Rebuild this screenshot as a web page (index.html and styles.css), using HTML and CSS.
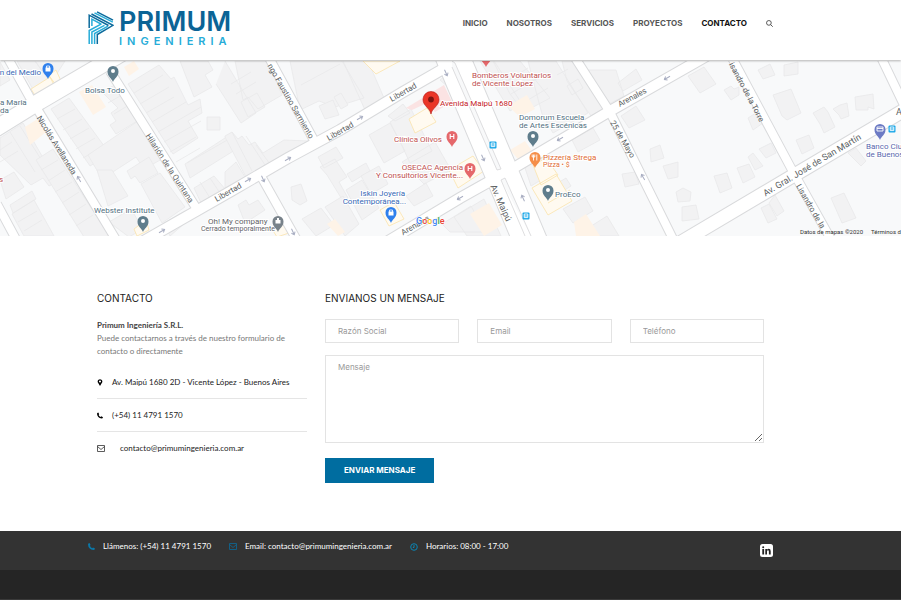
FILE: index.html
```html
<!DOCTYPE html>
<html lang="es">
<head>
<meta charset="utf-8">
<meta name="viewport" content="width=device-width, initial-scale=1">
<title>Contacto - Primum Ingeniería</title>
<link rel="stylesheet" href="styles.css">
</head>
<body>
<header class="header">
  <a class="logo" href="#">
    <svg class="logo-mark" viewBox="0 0 26 34" aria-hidden="true">
      <g fill="none" stroke-width="1.5">
        <g stroke="#27acd8">
          <path d="M6.500 1.800L24.800 11.200"/>
          <path d="M1.200 33V19.500L13.500 12.800"/>
          <path d="M3.900 33V21L16.500 14.300"/>
          <path d="M6.600 33V22.500L20 15.200"/>
          <path d="M3.900 15V8.200L13 13"/>
        </g>
        <g stroke="#0b6a9c">
          <path d="M9 .8L25 9.200"/>
          <path d="M1.200 17V4.200L20.500 14.500"/>
          <path d="M3.500 3L25 14.300 9.300 23.500V33"/>
        </g>
      </g>
    </svg>
    <span class="logo-text"><span class="logo-name">PRIMUM</span><span class="logo-sub">INGENIERIA</span></span>
  </a>
  <nav class="nav">
    <a href="#">INICIO</a>
    <a href="#">NOSOTROS</a>
    <a href="#">SERVICIOS</a>
    <a href="#">PROYECTOS</a>
    <a class="active" href="#">CONTACTO</a>
    <button class="search" type="button" aria-label="Buscar">
      <svg viewBox="0 0 8 8"><circle cx="3.300" cy="3.300" r="2.700"/><path d="M5.200 5.200L7.700 7.700"/></svg>
    </button>
  </nav>
</header>

<main>
  <section class="map" aria-label="Mapa">
    <svg viewBox="0 61 901 175" preserveAspectRatio="xMidYMid slice">
      <defs>
        <path id="pin" d="M0 9C-1 5.500-5.500 4-5.500-1.500a5.500 5.500 0 0 1 11 0C5.500 4 1 5.500 0 9z"/>
        <path id="arrow" d="M-3.500 0H3M.5-2L3 0 .5 2"/>
        <g id="bus"><rect x="-3.500" y="-3.500" width="7" height="7" rx="1" fill="#1aa7e8"/><path d="M-1.800-2h3.600v3.600h-3.600zM-1.800 0h3.600" fill="none" stroke="#fff" stroke-width=".9"/></g>
      </defs>
      <rect y="50" width="901" height="200" fill="#f8f9fa"/>

      <g class="lot">
        <path d="M0 62L10 80 0 86zM17 61h18l16 22-16 10zM35 61h30l-14 22z"/>
        <path d="M51 109l18-11 41 56-20 12zM57 119l18-10M63 130l19-11M70 139l19-11M76 149l19-11M83 158l19-11"/>
        <path d="M0 138l23-15 34 59-8 4-6-8-12 7-31-30zM10 132l25 40M20 126l24 38M0 150l12-8M0 162l18-11"/>
        <path d="M36 160l17-11 57 88H84zM41 170l17-10M48 181l17-11M55 192l17-10M62 203l17-11M69 215l17-11M76 226l17-11"/>
        <path d="M0 180l14-8 10 15-18 12zM10 205l22-14 4 8-23 14zM12 214l22-14 20 36H24zM18 222l19-11M24 231l18-11"/>
        <path d="M102 92l18-10 22 36-26 16-6-9 6-4-5-8 7-5zM108 103l19-11M114 114l20-12"/>
        <path d="M128 84l31-19 12 14 3-2 14 28 12-6 2 14-14 8 10 17-25 16zM134 93l29-18M140 104l29-17M146 113l28-16M152 122l34-20M158 132l43-25M164 142l37-21M170 152l26-15M176 162l24-14"/>
        <path d="M180 61l14 36 18-10-7-12 8-5-5-9zM207 117h13v13h-13z"/>
        <path d="M88 155l50-34 24 38-18 10-8-12-34 22z"/>
        <path d="M97 170l11 36 20-10-16-26zM127 171l22-14 9 16-18 10-5-7-4 3zM141 184l19-11 25 34-23 16zM109 222l22-13 12 20-14 8zM164 223l21-12 7 6-22 19z"/>
        <path d="M190 178l45-28-7-14-43 28zM187 163l42-24M194 188l20-12 12 14-24 15zM200 182l10 16M210 178l10 15"/>
        <path d="M235 61h33l14 34-24 14-10-12-5 3zM225 61l31 52-15 10-25-39M241 102l16-9 8 14-17 10zM231 84l20-12M236 94l20-12"/>
        <path d="M225 136l7-4 6 7 4-3 7 9 6-3 8 11 21-13 24 1-62 36-21-40zM232 132l20 39M246 136l21 32M256 145l14 19"/>
        <path d="M225 172l11-10 9 15-20 11zM238 205l8-5 3 5 9-5 7 10-20 13zM290 61h52l22 37-29 9-16-6-19 9zM301 85l39-21M343 61h25l16 37-19 12z"/>
        <path d="M319 106l14-6 6 15-14 4zM334 97l7-4 7 12-7 4z"/>
        <path d="M318 157l18-10 7 11-19 10zM320 167l15-8 12 18-8 5 9 16-5 3-16-26zM347 174l19-11 4 8-18 11zM291 187l10-3 6 17-7 4-8-5z"/>
        <path d="M302 219l19-11 13 17-18 11zM325 207l18-11 16 28-14 12zM346 190l16-10 17 28-17 12zM361 176l18-10 9 18-17 10z"/>
        <path d="M369 135l21-12 15 28-21 12zM390 122l21-13 21 42-22 12-7-15zM388 116l15-12 7 9-15 8zM402 162l33-20 16 28-27 14zM406 196l20-13 7 13-19 10z"/>
        <path d="M442 224l29-18 14 26h-35zM454 217l30-18 17 37h-34zM459 193l22-13M440 80l11-9 4 22z"/>
        <path d="M480 61h14l28 43-12 7zM493 61h27l30 37-26 14-14-18zM504 83l24-15M511 94l27-16M518 106l30-18M528 61h28l32 52-35 20-11-19zM562 61h18l25 47-14 8-24-35zM567 86l11-7 5 9-11 7zM557 75l11-6"/>
        <path d="M588 70h28l8 26-17 9zM618 83l18-14 6 11-19 11zM621 116l15-10 9 14-16 8zM572 140l21-12 7 12-22 12z"/>
        <path d="M524 165l23-9 7 16-23 14zM546 190l20-12 5 8-19 12zM563 209l22-12 8 14-20 12zM585 230l22-14 12 20h-29zM650 149l10-4 4 13-13 4zM622 174l13-2 4 12-14 3zM663 166l15-4v15l-10 2z"/>
        <path d="M688 76l16-9 12 17-16 9zM724 90l7-4 3 3 5-2v8l-8 5zM758 70l12-6 5 11-12 4zM784 65l14-3v12l-14 2z"/>
        <path d="M773 95l18-6 10 24-14 7-5-4zM813 113l11-6 4 5 7 15-11 6-4-9zM833 109l7-4 7-2 2 13-8 3-2-4zM855 97l18-3 1 15-6-2v3h-12z"/>
        <path d="M748 118l8-5 7 10-10 7zM796 140l13-5 5 13-12 6zM759 149l12-6 5 10-10 5zM748 157l5-4 10 13-8 4zM737 168l12-4 6 13-12 6zM714 176l13-3 5 15-12 5zM676 192l7-4 8 4-1 9-12 1zM682 207l14-2 3 14-17 2z"/>
        <path d="M761 208l8-4 8 15-9 4zM769 203l6-8 9 16-7 5zM831 198l13-5 12 25-14 5zM848 153l8-5 10 13-5 5z"/>
      </g>
      <g class="shop">
        <path d="M31 89l19-12 6 8-20 12zM49 75l7-5 5 11-7 4zM363 61h37l-24 13zM409 119l18-11 9 14-21 11zM533 165l13-7 12 17-17 10zM532 188l24-14 16 27-24 14zM380 210l14-8 10 17-15 7zM449 170l24-14 11 15-26 17zM548 203l22-13M134 229l12-9 3 10-12 6zM272 229l12-8 5 12-12 4z"/>
      </g>
      <g fill="#fef3e7">
        <path d="M79 92l13-7 14 22-13 8zM124 67l10-6 5 8-10 7zM25 127l14-9 7 14-16 13zM510 150l15-9 7 10-14 8zM508 106l19-11 8 14-15 8zM574 222l12-8 14 22h-24zM470 214l19-11 13 22-18 11zM327 224l8-5 10 13-7 4z"/>
      </g>
      <path d="M406 108l38-23 8 17-17 10-8-9-15 7z" fill="#fbe3e3"/>

      <g class="road-edge">
        <path d="M-5 129L40 101 122 53" stroke-width="18"/>
        <path d="M5 53L29 96 39 112 118 243M110 71L200 214M267 54L316 144M262 178L298 242M-3 204L18 243M572 53L610 112 675 243M730 54L791 168 833 243M879 53L904 105" stroke-width="10"/>
        <path d="M142 242L233 190 288 158 340 130 403 92 450 65M385 243L460 198 517 166 610 111 710 54" stroke-width="12"/>
        <path d="M451 53L531 243" stroke-width="35"/>
        <path d="M673 247L791 177 906 109" stroke-width="15"/>
      </g>
      <g class="road">
        <path d="M-5 129L40 101 122 53" stroke-width="16"/>
        <path d="M5 53L29 96 39 112 118 243M110 71L200 214M267 54L316 144M262 178L298 242M-3 204L18 243M572 53L610 112 675 243M730 54L791 168 833 243M879 53L904 105" stroke-width="8"/>
        <path d="M142 242L233 190 288 158 340 130 403 92 450 65M385 243L460 198 517 166 610 111 710 54" stroke-width="10"/>
        <path d="M451 53L531 243" stroke-width="33"/>
        <path d="M673 247L791 177 906 109" stroke-width="13"/>
      </g>
      <path d="M452 61l3 2 46 106-4 1-45-103M501 180l4-2 26 58M501 180l24 56" fill="#f8f9fa" stroke="#d5d6d8" stroke-width=".8"/>

      <g class="arrows">
        <use href="#arrow" transform="translate(162 231) rotate(-30)"/><use href="#arrow" transform="translate(248 180) rotate(-30)"/>
        <use href="#arrow" transform="translate(288 159) rotate(-30)"/><use href="#arrow" transform="translate(360 118) rotate(-30)"/>
        <use href="#arrow" transform="translate(446 73) rotate(65)"/><use href="#arrow" transform="translate(263 179) rotate(65)"/>
        <use href="#arrow" transform="translate(293 232) rotate(65)"/><use href="#arrow" transform="translate(79 179) rotate(240)"/>
        <use href="#arrow" transform="translate(483 158) rotate(65)"/><use href="#arrow" transform="translate(523 198) rotate(245)"/>
        <use href="#arrow" transform="translate(560 139) rotate(150)"/><use href="#arrow" transform="translate(460 198) rotate(150)"/>
        <use href="#arrow" transform="translate(667 78) rotate(150)"/><use href="#arrow" transform="translate(643 177) rotate(240)"/>
      </g>

      <g class="street">
        <text transform="translate(57 145) rotate(58)" y="3">Nicolás Avellaneda</text>
        <text transform="translate(170 168) rotate(57)" y="3">Hilarión de la Quintana</text>
        <text transform="translate(291 101) rotate(60)" y="3">ngo Faustino Sarmiento</text>
        <text transform="translate(228 192) rotate(-30)" y="3">Libertad</text>
        <text transform="translate(340 131) rotate(-30)" y="3">Libertad</text>
        <text transform="translate(403 92) rotate(-30)" y="3">Libertad</text>
        <text transform="translate(415 225) rotate(-30)" y="3">Arenales</text>
        <text transform="translate(632 97) rotate(-28)" y="3">Arenales</text>
        <text transform="translate(623 139) rotate(60)" y="3">25 de Mayo</text>
        <text transform="translate(747 92) rotate(62)" y="3">isandro de la Torre</text>
        <text transform="translate(811 206) rotate(60)" y="3">Lisandro de la</text>
        <text class="avenue" transform="translate(501 203) rotate(66)" y="3">Av. Maipú</text>
        <text class="avenue" transform="translate(812 165) rotate(-31)" y="3">Av. Gral. José de San Martín</text>
        <text class="avenue" x="899" y="115">A</text>
      </g>

      <g class="place blue">
        <text x="41" y="75" text-anchor="end">n del Medio</text>
        <text x="405" y="196" text-anchor="end">Iskin Joyería</text>
        <text x="406" y="204" text-anchor="end">Contemporánea...</text>
      </g>
      <g class="place slate">
        <text x="0" y="105">a Maria</text><text x="0" y="113">da</text>
        <text x="85" y="93">Bolsa Todo</text>
        <text x="94" y="213">Webster Institute</text>
        <text x="519" y="120">Domorum Escuela</text>
        <text x="519" y="128">de Artes Escénicas</text>
        <text x="555" y="197">ProEco</text>
      </g>
      <g class="place grey"><text x="208" y="224">Oh! My company</text><text class="small" x="201" y="231">Cerrado temporalmente</text></g>
      <g class="place rose">
        <text x="472" y="78">Bomberos Voluntarios</text><text x="472" y="86">de Vicente López</text>
        <text x="394" y="142">Clínica Olivos</text>
        <text x="463" y="170" text-anchor="end">OSECAC Agencia</text>
        <text x="463" y="178" text-anchor="end">Y Consultorios Vicente...</text>
        <text x="-1" y="182">s</text>
      </g>
      <g class="place orange"><text x="543" y="160">Pizzería Strega</text><text class="small" x="543" y="167">Pizza • $</text></g>
      <g class="place indigo"><text x="866" y="149">Banco Ciudad</text><text x="866" y="157">de Buenos Aires</text></g>
      <g class="place red"><text x="440" y="106">Avenida Maipú 1680</text></g>

      <g fill="#5f7d8c"><use href="#pin" x="113" y="73"/><use href="#pin" x="143" y="223"/><use href="#pin" x="533" y="138"/><use href="#pin" x="548" y="192"/></g>
      <g fill="#fff"><circle cx="113" cy="71" r="2"/><circle cx="143" cy="221" r="2"/><circle cx="533" cy="136" r="2"/><circle cx="548" cy="190" r="2"/></g>
      <g fill="#2f80ed"><use href="#pin" x="48" y="70"/><use href="#pin" x="391" y="214"/></g>
      <g fill="#fff"><path d="M45.500 67.500h5v4h-5zM388.500 211.500h5v4h-5z"/></g>
      <path d="M46.500 68v-2h3v2M389.500 212v-2h3v2" fill="none" stroke="#fff" stroke-width=".8"/>
      <use href="#pin" x="278" y="223" fill="#78828a"/><path d="M275.500 220h5v3.500h-5zM277 220v-2h2v2" fill="#fff"/>
      <g fill="#e5686b"><use href="#pin" x="452" y="138"/><use href="#pin" x="470" y="170"/><use href="#pin" x="486" y="58"/></g>
      <path d="M450.200 134v5M453.800 134v5M450.200 136.500h3.600M468.200 166v5M471.800 166v5M468.200 168.500h3.600" stroke="#fff" stroke-width="1.100"/>
      <use href="#pin" x="535" y="159" fill="#f58e48"/><path d="M533.500 154.500v6M536.800 154.500v6M532.200 154.500v2.500h2.600v-2.500" fill="none" stroke="#fff" stroke-width=".9"/>
      <use href="#pin" x="880" y="131" fill="#6c7ac4"/><path d="M877 127h6v4h-6zM877 128.500h6" fill="none" stroke="#fff" stroke-width=".9"/>
      <use href="#bus" x="493" y="145"/><use href="#bus" x="526" y="216"/><use href="#bus" x="892" y="129"/>
      <path d="M431 114c-1-6-8-8-8-14.500a8 8 0 0 1 16 0C439 106 432 108 431 114z" fill="#ea3527" stroke="#b31412" stroke-width=".6"/>
      <circle cx="431" cy="99.500" r="2.900" fill="#7d1410"/>
      <text class="google" x="416" y="224"><tspan fill="#4285f4">G</tspan><tspan fill="#ea4335">o</tspan><tspan fill="#fbbc05">o</tspan><tspan fill="#4285f4">g</tspan><tspan fill="#34a853">l</tspan><tspan fill="#ea4335">e</tspan></text>
      <g class="legal"><text x="800" y="234">Datos de mapas ©2020</text><text x="871" y="234">Términos de uso</text></g>
    </svg>
  </section>

  <div class="content">
    <section class="info">
      <h2>CONTACTO</h2>
      <p class="intro"><strong>Primum Ingeniería S.R.L.</strong><br>Puede contactarnos a través de nuestro formulario de contacto o directamente</p>
      <ul class="details">
        <li><svg class="icon-sm" viewBox="0 0 6 8"><path fill-rule="evenodd" d="M3 8L.8 4.300A2.600 2.600 0 1 1 5.200 4.300zM3 1.700a1.200 1.200 0 1 0 0 2.400 1.200 1.200 0 0 0 0-2.400z"/></svg><span>Av. Maipú 1680 2D - Vicente López - Buenos Aires</span></li>
        <li><svg class="icon-sm" viewBox="0 0 6 6"><path d="M1.300 0L2.200 1.700 1.600 2.400Q2.300 3.800 3.600 4.400L4.300 3.800 6 4.700Q5.800 6 4.600 6 .3 5.500 0 1.300 0 .2 1.300 0z"/></svg><span>(+54) 11 4791 1570</span></li>
        <li class="mail"><svg class="icon-mail" viewBox="0 0 8 7"><path d="M.5.5h7v6h-7zM.5 1.500L4 4.500 7.500 1.500"/></svg><a href="mailto:contacto@primumingenieria.com.ar">contacto@primumingenieria.com.ar</a></li>
      </ul>
    </section>
    <section>
      <h2>ENVIANOS UN MENSAJE</h2>
      <form class="form">
        <input type="text" aria-label="Razón Social" placeholder="Razón Social">
        <input type="email" aria-label="Email" placeholder="Email">
        <input type="tel" aria-label="Teléfono" placeholder="Teléfono">
        <textarea aria-label="Mensaje" placeholder="Mensaje"></textarea>
        <button class="send" type="submit">ENVIAR MENSAJE</button>
      </form>
    </section>
  </div>
</main>

<footer class="footer">
  <div class="footer-top">
    <ul class="footer-list">
      <li><svg class="icon-phone" viewBox="0 0 6 6"><path d="M1.300 0L2.200 1.700 1.600 2.400Q2.300 3.800 3.600 4.400L4.300 3.800 6 4.700Q5.800 6 4.600 6 .3 5.500 0 1.300 0 .2 1.300 0z"/></svg>Llámenos: (+54) 11 4791 1570</li>
      <li><svg class="icon-mail" viewBox="0 0 8 7"><path d="M.5.5h7v6h-7zM.5 1.500L4 4.500 7.500 1.500"/></svg>Email: contacto@primumingenieria.com.ar</li>
      <li><svg class="icon-clock" viewBox="0 0 8 8"><circle cx="4" cy="4" r="3.300"/><path d="M4 2v2.500H2.800"/></svg>Horarios: 08:00 - 17:00</li>
    </ul>
    <a class="linkedin" href="#" aria-label="LinkedIn">
      <svg viewBox="0 0 13 13"><rect width="13" height="13" rx="2.500" fill="#fff"/><path d="M2.300 5h1.800v5.600H2.300zM5.300 5H7v.8q.6-1 1.700-1 2 0 2 2.400v3.400H8.900V7.500q0-1.200-.9-1.200-1 0-1 1.300v3H5.300z" fill="#222"/><circle cx="3.200" cy="3.200" r="1" fill="#222"/></svg>
    </a>
  </div>
  <div class="footer-bottom"></div>
</footer>
</body>
</html>
```
FILE: styles.css
```css
* { box-sizing: border-box; }

body {
  display: flex;
  flex-direction: column;
  min-height: 100vh;
  margin: 0;
  background: #fff;
  color: #222;
  font: 8px/13px Lato, sans-serif;
}

a { color: inherit; text-decoration: none; }
ul { margin: 0; padding: 0; list-style: none; }
svg { display: block; flex: none; }

.header {
  display: flex;
  justify-content: space-between;
  position: relative;
  height: 60px;
  padding: 11px 128px 0 88px;
  background: #fff;
  box-shadow: 0 1px 2px rgba(0, 0, 0, .3);
}

.logo { display: flex; gap: 5px; font-family: Inter, sans-serif; }
.logo-mark { width: 26px; height: 34px; }
.logo-text { display: flex; flex-direction: column; }
.logo-name {
  color: #0b6496;
  font-size: 27px;
  font-weight: 600;
  line-height: 22px;
}
.logo-sub {
  padding-top: 2px;
  color: #27acd8;
  font-size: 11px;
  font-weight: 600;
  letter-spacing: 5px;
  line-height: 12px;
}

.nav {
  display: flex;
  align-items: center;
  gap: 19px;
  height: 24px;
  color: #555;
  font-family: Inter, sans-serif;
  font-weight: 700;
}
.nav .active { color: #111; }
.search { padding: 0; border: 0; background: none; }
.search svg { width: 7px; height: 7px; fill: none; stroke: #444; }

.map { height: 176px; padding-top: 1px; }
.map svg { width: 100%; height: 175px; font-family: Roboto, sans-serif; }
.lot { fill: #f2f2f3; stroke: #e8e8ea; stroke-width: .8; }
.shop { fill: #fffaf0; stroke: #fae3ac; stroke-width: .8; }
.road-edge { fill: none; stroke: #d9dadc; }
.road { fill: none; stroke: #fff; }
.arrows { fill: none; stroke: #a9aec2; stroke-width: 1; }
.street { fill: #5c5f63; font-size: 8px; text-anchor: middle; }
.avenue { font-size: 9px; }
.place { font-size: 8px; stroke: #fff; stroke-width: 2px; paint-order: stroke; }
.small { font-size: 7px; }
.blue { fill: #3568b5; }
.slate { fill: #52707f; }
.grey { fill: #5f6368; }
.rose { fill: #c05050; }
.orange { fill: #df6c34; }
.indigo { fill: #5867ad; }
.red { fill: #c5221f; }
.google { font: 500 9px Roboto, sans-serif; stroke: #fff; stroke-width: 1px; paint-order: stroke; }
.legal { fill: #333; font-size: 6px; }

.content {
  display: grid;
  grid-template-columns: 210fr 439fr;
  gap: 18px;
  padding: 55px 137px 48px 97px;
}

h2 {
  margin: 0 0 14px;
  color: #222;
  font: 400 10px/14px Inter, sans-serif;
}

.intro { margin: 0 0 8px; color: #777; }
.intro strong { color: #444; }

.details li {
  display: flex;
  align-items: center;
  gap: 9px;
  height: 33px;
  border-bottom: 1px solid #e5e5e5;
}
.details li:last-child { border-bottom: 0; }
.details .mail { gap: 15px; }
.icon-sm { width: 6px; height: 7px; }
.icon-mail { width: 8px; height: 7px; fill: none; stroke: #333; stroke-width: .8; }

.form {
  display: grid;
  grid-template-columns: repeat(3, 1fr);
  gap: 12px 18px;
}
input, textarea {
  width: 100%;
  min-width: 0;
  border: 1px solid #e3e3e3;
  border-radius: 0;
  background: #fff;
  color: #333;
  font: 8px/13px Inter, sans-serif;
}
input { height: 24px; padding: 0 12px; }
textarea {
  grid-column: 1 / -1;
  display: block;
  height: 88px;
  padding: 5px 12px;
  resize: vertical;
}
::placeholder { color: #999; opacity: 1; }
.send {
  grid-column: 1 / -1;
  justify-self: start;
  height: 25px;
  margin-top: 3px;
  padding: 0 19px;
  border: 0;
  background: #006da0;
  color: #fff;
  font: 700 8px/13px Inter, sans-serif;
}

.footer {
  display: flex;
  flex: 1;
  flex-direction: column;
  background: #252525;
  color: #fff;
}
.footer-top {
  display: flex;
  justify-content: space-between;
  height: 39px;
  padding: 9px 128px 0 88px;
  background: #333;
}
.footer-list { display: flex; gap: 18px; }
.footer-list li { display: flex; align-items: center; gap: 8px; height: 13px; }
.icon-phone { width: 7px; height: 7px; fill: #0b78a8; }
.footer .icon-mail { stroke: #0b6a98; }
.icon-clock { width: 8px; height: 8px; fill: none; stroke: #0b86b4; }
.linkedin { padding-top: 4px; }
.linkedin svg { width: 13px; height: 13px; }
.footer-bottom { flex: 1; border-bottom: 1px solid #3a3a3a; }
```
